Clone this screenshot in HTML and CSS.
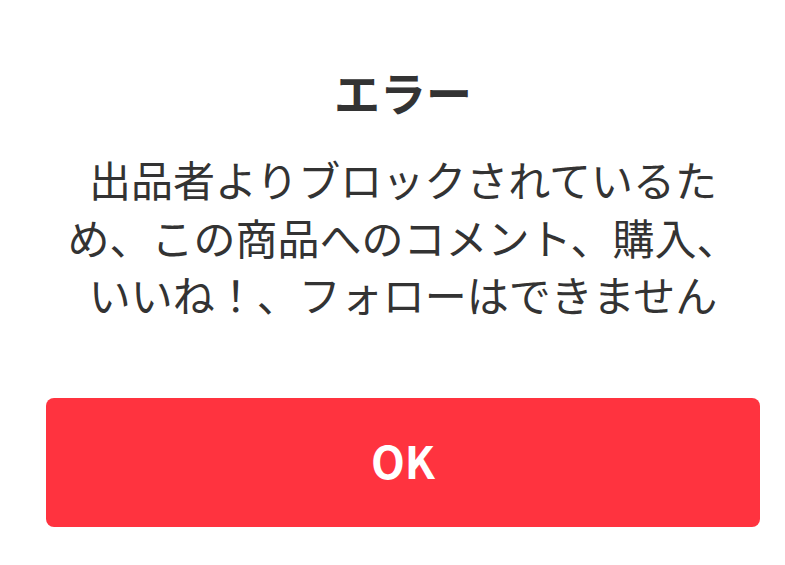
FILE: index.html
```html
<!DOCTYPE html>
<html lang="ja">
<head>
<meta charset="utf-8">
<title>エラー</title>
<link rel="stylesheet" href="styles.css">
</head>
<body>
<div class="dialog">
  <h1 class="dialog-title">エラー</h1>
  <p class="dialog-message">出品者よりブロックされているた<br>め、この商品へのコメント、購入、<br>いいね！、フォローはできません</p>
  <button class="dialog-button" type="button">OK</button>
</div>
</body>
</html>
```
FILE: styles.css
```css
html, body {
  margin: 0;
  padding: 0;
  background: #ffffff;
}

body {
  width: 785px;
  height: 565px;
  overflow: hidden;
  font-family: "Noto Sans CJK JP", "Noto Sans", sans-serif;
  color: #333333;
}

.dialog {
  display: flex;
  flex-direction: column;
  align-items: stretch;
  width: 714px;
  margin-left: 46px;
  padding-top: 66px;
}

.dialog-title {
  margin: 0;
  font-size: 46px;
  line-height: 50px;
  font-weight: 700;
  text-align: center;
}

.dialog-message {
  margin: 34px 0 0;
  font-size: 42px;
  line-height: 57.5px;
  font-weight: 400;
  text-align: center;
  white-space: nowrap;
}

.dialog-button {
  margin-top: 75px;
  height: 129px;
  border: none;
  border-radius: 8px;
  background: #ff333f;
  color: #ffffff;
  font-family: "Noto Sans CJK JP", "Noto Sans", sans-serif;
  font-size: 44px;
  font-weight: 700;
  padding: 0 0 4px;
}
```
